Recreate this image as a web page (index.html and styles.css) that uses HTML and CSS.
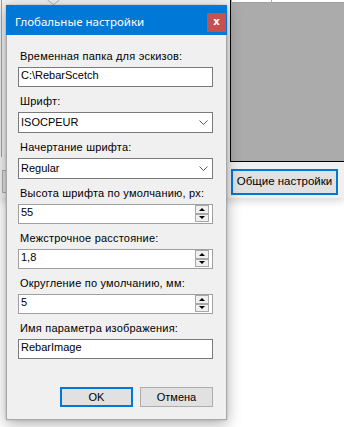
FILE: index.html
```html
<!DOCTYPE html>
<html lang="ru">
<head>
<meta charset="utf-8">
<title>Глобальные настройки</title>
<link rel="stylesheet" href="styles.css">
</head>
<body>
<div class="backwin">
  <div class="back-left-line"></div>
  <div class="back-left-btn"></div>
  <svg class="back-chevron" width="14" height="6" viewBox="0 0 14 6"><polyline points="0.5,0 6.5,4.5 12.5,0" fill="none" stroke="#b0b0b0" stroke-width="1"/></svg>
  <div class="preview">
    <span class="pb-cell pb-a"></span>
    <span class="pb-cell pb-b"></span>
  </div>
  <div class="back-btn">Общие настройки</div>
</div>

<div class="dialog">
  <div class="titlebar">
    <span class="title">Глобальные настройки</span>
    <span class="close">x</span>
  </div>
  <div class="body">
    <div class="field">
      <div class="label">Временная папка для эскизов:</div>
      <div class="input">C:\RebarScetch</div>
    </div>
    <div class="field">
      <div class="label">Шрифт:</div>
      <div class="combo"><span class="combo-text">ISOCPEUR</span><svg class="chev" width="9" height="5" viewBox="0 0 9 5"><polyline points="0.5,0.5 4.5,4.5 8.5,0.5" fill="none" stroke="#5a5a5a" stroke-width="1"/></svg></div>
    </div>
    <div class="field">
      <div class="label">Начертание шрифта:</div>
      <div class="combo"><span class="combo-text">Regular</span><svg class="chev" width="9" height="5" viewBox="0 0 9 5"><polyline points="0.5,0.5 4.5,4.5 8.5,0.5" fill="none" stroke="#5a5a5a" stroke-width="1"/></svg></div>
    </div>
    <div class="field">
      <div class="label">Высота шрифта по умолчанию, px:</div>
      <div class="spinner"><span class="spin-text">55</span><span class="spin"><span class="spin-btn"><i class="arr-up"></i></span><span class="spin-btn"><i class="arr-down"></i></span></span></div>
    </div>
    <div class="field">
      <div class="label">Межстрочное расстояние:</div>
      <div class="spinner"><span class="spin-text">1,8</span><span class="spin"><span class="spin-btn"><i class="arr-up"></i></span><span class="spin-btn"><i class="arr-down"></i></span></span></div>
    </div>
    <div class="field">
      <div class="label">Округление по умолчанию, мм:</div>
      <div class="spinner"><span class="spin-text">5</span><span class="spin"><span class="spin-btn"><i class="arr-up"></i></span><span class="spin-btn"><i class="arr-down"></i></span></span></div>
    </div>
    <div class="field">
      <div class="label">Имя параметра изображения:</div>
      <div class="input">RebarImage</div>
    </div>
    <div class="actions">
      <div class="btn btn-default">OK</div>
      <div class="btn">Отмена</div>
    </div>
  </div>
</div>
</body>
</html>
```

FILE: styles.css
```css
html, body {
  margin: 0;
  padding: 0;
}
body {
  width: 344px;
  height: 427px;
  overflow: hidden;
  position: relative;
  background: #ffffff;
  font-family: "Liberation Sans", Arial, sans-serif;
  font-size: 11px;
  color: #000;
}

/* window behind the dialog */
.backwin {
  position: absolute;
  left: 0;
  top: 0;
  width: 344px;
  height: 198px;
  background: #f0f0f0;
  box-shadow: 0 3px 8px rgba(0, 0, 0, 0.16);
}
.back-left-line {
  position: absolute;
  left: 1px;
  top: 0;
  width: 1px;
  height: 157px;
  background: #a0a0a0;
}
.back-left-btn {
  position: absolute;
  left: 2px;
  top: 170px;
  width: 60px;
  height: 23px;
  box-sizing: border-box;
  border: 1px solid #adadad;
  background: #e1e1e1;
}
.back-chevron {
  position: absolute;
  left: 47px;
  top: 0;
}
.preview {
  position: absolute;
  left: 230px;
  top: -1px;
  width: 114px;
  height: 163px;
  box-sizing: border-box;
  background: #ababab;
  border-left: 1px solid #000;
  border-bottom: 1px solid #000;
}
.pb-cell {
  position: absolute;
  top: 0;
  height: 4px;
  box-sizing: border-box;
  background: #fff;
  border-bottom: 1px solid #a0a0a0;
}
.pb-a { left: 1px; width: 39px; }
.pb-b { left: 41px; width: 72px; }
.back-btn {
  position: absolute;
  left: 231px;
  top: 169px;
  width: 107px;
  height: 26px;
  box-sizing: border-box;
  border: 2px solid #0078d7;
  background: #e1e1e1;
  font-size: 11.5px;
  line-height: 21px;
  text-align: center;
}

/* dialog */
.dialog {
  position: absolute;
  left: 6px;
  top: 5px;
  width: 221px;
  box-shadow: 0 4px 14px rgba(0, 0, 0, 0.32), 0 0 2px rgba(0, 0, 0, 0.2);
}
.titlebar {
  height: 30px;
  background: #0078d7;
  display: flex;
  align-items: flex-start;
}
.title {
  color: #fff;
  font-family: "Noto Sans", "Open Sans", sans-serif;
  font-size: 11.5px;
  line-height: 27px;
  padding: 3px 0 0 9px;
}
.close {
  margin: 8px 1px 0 auto;
  width: 19px;
  height: 19px;
  background: #c75050;
  color: #fff;
  font-family: "DejaVu Sans", sans-serif;
  font-weight: bold;
  font-size: 10px;
  line-height: 17px;
  text-align: center;
}
.body {
  background: #f0f0f0;
  border: 1px solid #a9a9a9;
  border-top: none;
  padding: 15px 13px 12px 11px;
  display: flex;
  flex-direction: column;
  gap: 8px;
}
.label {
  line-height: 13px;
  padding-left: 2px;
  margin-bottom: 4px;
  white-space: nowrap;
  letter-spacing: 0.2px;
}
.input, .combo, .spinner {
  box-sizing: border-box;
  background: #fff;
  border: 1px solid #7a7a7a;
  white-space: nowrap;
}
.input {
  height: 20px;
  line-height: 15px;
  padding: 0 2px;
}
.combo {
  height: 21px;
  display: flex;
  align-items: flex-start;
}
.combo-text {
  flex: 1;
  line-height: 15px;
  padding: 2px 0 0 2px;
}
.chev {
  margin: 7px 4px 0 0;
}
.spinner {
  height: 20px;
  display: flex;
  border-color: #a0a0a0;
}
.spin-text {
  flex: 1;
  line-height: 15px;
  padding-left: 2px;
}
.spin {
  width: 14px;
  margin: 0 3px 1px 0;
  display: flex;
  flex-direction: column;
}
.spin-btn {
  flex: 1;
  box-sizing: border-box;
  background: #f0f0f0;
  border: 1px solid #a8a8a8;
  display: flex;
  align-items: center;
  justify-content: center;
}
.arr-up, .arr-down {
  width: 0;
  height: 0;
  border-left: 3px solid transparent;
  border-right: 3px solid transparent;
}
.arr-up { border-bottom: 3px solid #000; }
.arr-down { border-top: 3px solid #000; }
.actions {
  margin-top: 20px;
  display: flex;
  justify-content: flex-end;
  gap: 7px;
}
.btn {
  width: 73px;
  height: 20px;
  box-sizing: border-box;
  border: 1px solid #adadad;
  background: #e1e1e1;
  text-align: center;
  line-height: 18px;
}
.btn-default {
  border: 2px solid #0078d7;
  line-height: 16px;
}
```
